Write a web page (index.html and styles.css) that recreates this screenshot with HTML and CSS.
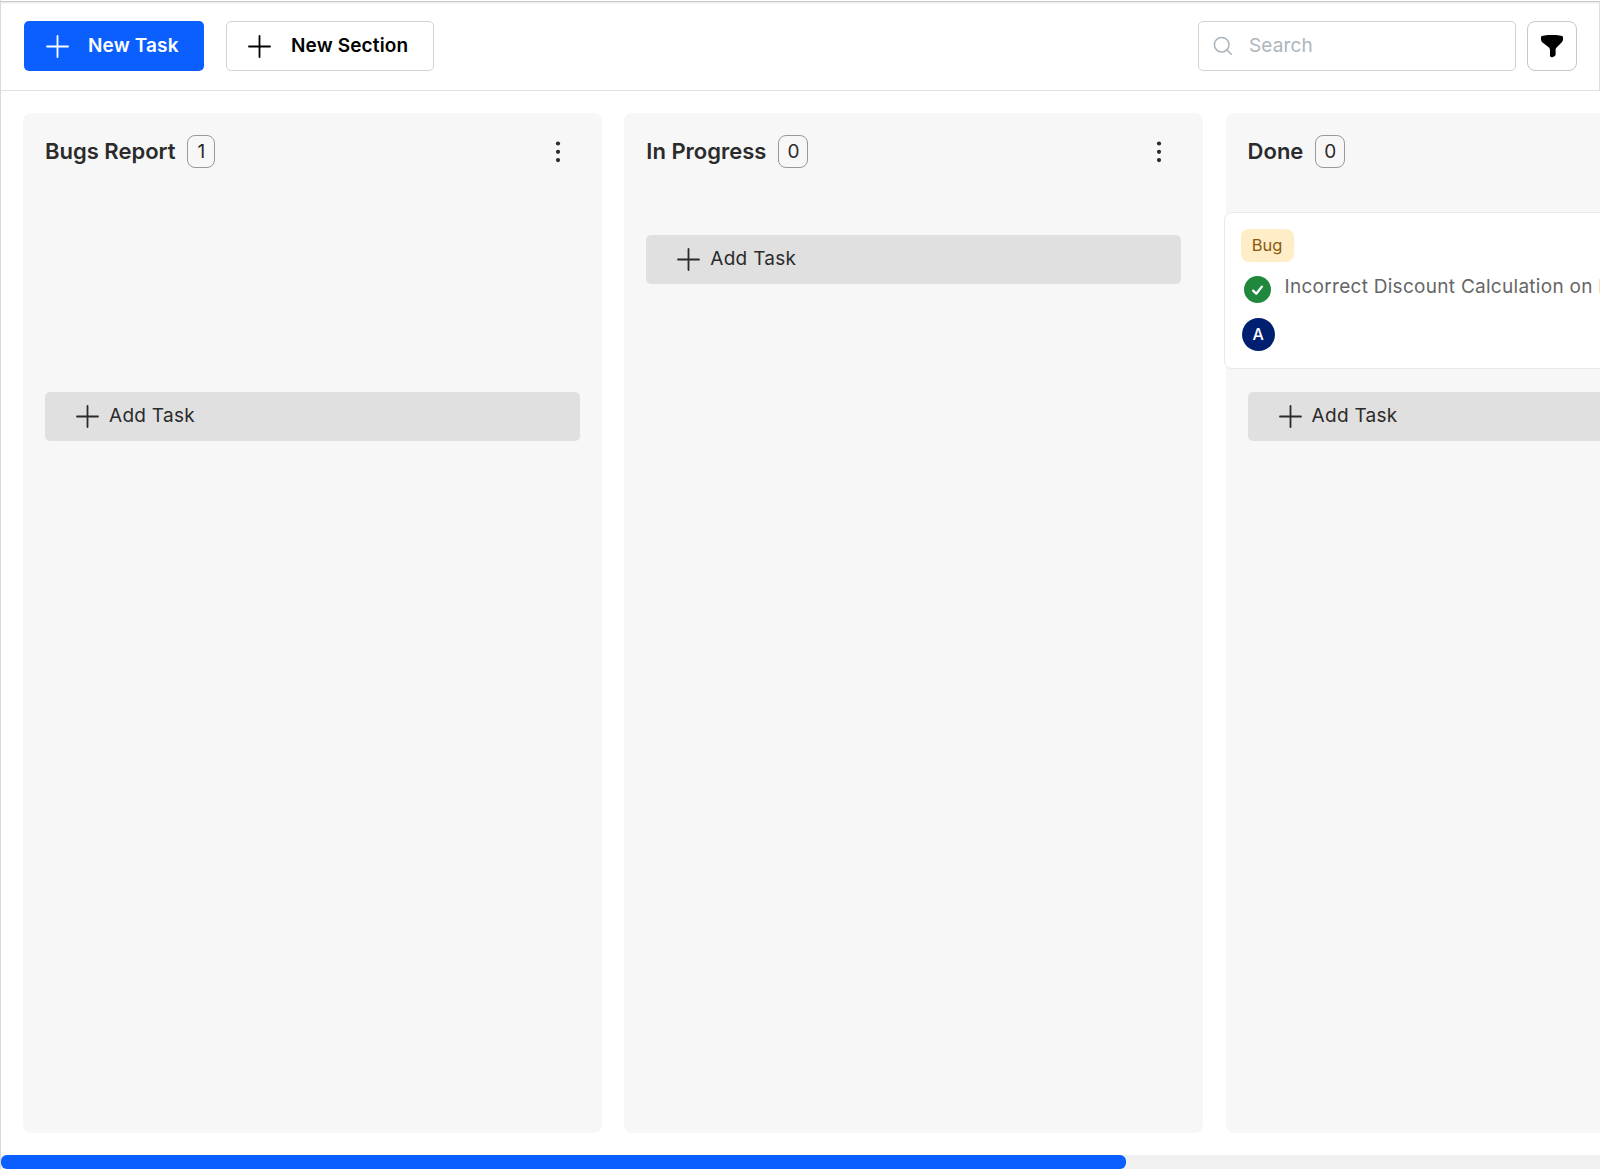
FILE: index.html
```html
<!DOCTYPE html>
<html lang="en">
<head>
  <meta charset="UTF-8">
  <title>Task Board</title>
  <link rel="stylesheet" href="styles.css">
</head>
<body>
  <svg class="sprite">
    <symbol id="plus" viewBox="0 0 23 23">
      <path d="M11.5 1v21M1 11.5h21" fill="none" stroke="currentColor" stroke-width="1.8" stroke-linecap="round"/>
    </symbol>
    <symbol id="dots" viewBox="0 0 6 24">
      <circle cx="3" cy="3.5" r="2.1"/>
      <circle cx="3" cy="11.8" r="2.1"/>
      <circle cx="3" cy="20.1" r="2.1"/>
    </symbol>
  </svg>

  <div class="app">
    <header class="toolbar">
      <button class="btn btn-primary"><svg class="plus"><use href="#plus"/></svg><span>New Task</span></button>
      <button class="btn btn-outline"><svg class="plus"><use href="#plus"/></svg><span>New Section</span></button>
      <label class="search">
        <svg class="search-icon" viewBox="0 0 20 20" fill="none" stroke="currentColor" stroke-width="1.5" stroke-linecap="round">
          <circle cx="8.7" cy="8.7" r="7.3"/>
          <path d="M14 14l4.3 4.3"/>
        </svg>
        <input type="text" placeholder="Search">
      </label>
      <button class="filter" aria-label="Filter">
        <svg viewBox="0 0 24 24">
          <path d="M1 3C1 .4 23 .4 23 3v2.3c0 1.2-.4 2-1.2 2.9l-5.2 5.2c-.7.7-1 1.300-1 2.200v4.700c0 1-.5 1.600-1.300 2l-1.200.7c-1.300.8-3.100.2-3.100-1.400V16c0-.9-.3-1.700-1-2.400L2.200 8.200C1.400 7.300 1 6.500 1 5.300z"/>
        </svg>
      </button>
    </header>

    <main class="board">
      <section class="column">
        <div class="column-head">
          <h2>Bugs Report</h2>
          <span class="count count-one">1</span>
          <svg class="dots"><use href="#dots"/></svg>
        </div>
        <div class="card-space"></div>
        <button class="add-task"><svg class="plus"><use href="#plus"/></svg><span>Add Task</span></button>
      </section>

      <section class="column">
        <div class="column-head">
          <h2>In Progress</h2>
          <span class="count">0</span>
          <svg class="dots"><use href="#dots"/></svg>
        </div>
        <button class="add-task"><svg class="plus"><use href="#plus"/></svg><span>Add Task</span></button>
      </section>

      <section class="column">
        <div class="column-head">
          <h2>Done</h2>
          <span class="count">0</span>
        </div>
        <article class="card">
          <span class="tag">Bug</span>
          <div class="card-title">
            <svg class="check" viewBox="0 0 27 27">
              <circle cx="13.5" cy="13.5" r="13.5" fill="#1f883d"/>
              <path d="M9.1 14.6l3.2 3.2 5.600-7.200" fill="none" stroke="#fff" stroke-width="2.300" stroke-linecap="round" stroke-linejoin="round"/>
            </svg>
            <span>Incorrect Discount Calculation on I</span>
          </div>
          <div class="avatar">A</div>
        </article>
        <button class="add-task"><svg class="plus"><use href="#plus"/></svg><span>Add Task</span></button>
      </section>
    </main>

    <div class="scrollbar"><div class="thumb"></div></div>
  </div>
</body>
</html>
```

FILE: styles.css
```css
* {
  box-sizing: border-box;
}
body {
  margin: 0;
  font-family: Inter, sans-serif;
  color: #2b2b2b;
  background: #fff;
  overflow: hidden;
}
button {
  font-family: inherit;
  padding: 0;
  border: none;
}
.sprite {
  display: none;
}
.app {
  width: 1600px;
  height: 1169px;
  padding-top: 1px;
  display: flex;
  flex-direction: column;
  border-left: 1px solid #d9d9d9;
  overflow: hidden;
}
.toolbar {
  height: 90px;
  flex: none;
  display: flex;
  align-items: flex-start;
  padding: 19px 22px 0 23px;
  border-top: 1px solid #c9cbcb;
  border-right: 1px solid #dedede;
  border-bottom: 1px solid #dfe1e1;
  box-shadow: inset 0 2px 2px -1px #e4e4e4;
}
.plus {
  width: 23px;
  height: 23px;
  flex: none;
}
.btn {
  height: 50px;
  display: flex;
  align-items: center;
  border-radius: 5px;
  font-size: 19px;
  font-weight: 600;
  letter-spacing: 0.15px;
}
.btn span,
.add-task span {
  padding-bottom: 2px;
}
.btn-primary {
  width: 180px;
  padding-left: 22px;
  gap: 19px;
  color: #fff;
  background: #0b5fff;
}
.btn-outline {
  width: 208px;
  margin-left: 22px;
  padding-left: 21px;
  gap: 20px;
  color: #000;
  background: #fff;
  border: 1px solid #ced4da;
}
.search {
  width: 318px;
  height: 50px;
  margin-left: auto;
  display: flex;
  align-items: center;
  padding-left: 14px;
  gap: 16px;
  border: 1px solid #ced4da;
  border-radius: 5px;
  color: #aab4bd;
}
.search-icon {
  width: 20px;
  height: 20px;
  flex: none;
}
.search input {
  width: 240px;
  padding: 0 0 1px;
  border: none;
  outline: none;
  font-family: inherit;
  font-size: 19px;
  letter-spacing: 0.15px;
}
.search input::placeholder {
  color: #adb5bd;
}
.filter {
  width: 50px;
  height: 50px;
  margin-left: 11px;
  display: flex;
  align-items: center;
  justify-content: center;
  border: 1px solid #c8c8c8;
  border-radius: 8px;
  background: #fff;
}
.filter svg {
  width: 24px;
  height: 24px;
}
.board {
  height: 1020px;
  margin-top: 22px;
  padding-left: 22px;
  flex: none;
  display: flex;
  gap: 22.3px;
}
.column {
  width: 579px;
  flex: none;
  padding: 22px;
  border-radius: 8px;
  background: #f7f7f7;
}
.column-head {
  height: 33px;
  display: flex;
  align-items: center;
}
.column-head h2 {
  margin: 0;
  padding-bottom: 1px;
  font-size: 22px;
  font-weight: 600;
  letter-spacing: 0;
}
.count {
  height: 33px;
  margin-left: 12px;
  padding: 0 8px;
  line-height: 31px;
  font-size: 19px;
  border: 1px solid #999;
  border-radius: 8px;
}
.count-one {
  padding: 0 9px;
}
.dots {
  width: 6px;
  height: 24px;
  margin-left: auto;
  margin-right: 19px;
  fill: #2b2b2b;
}
.card-space {
  height: 157px;
  margin-top: 44px;
  margin-bottom: -44px;
}
.add-task {
  width: 535px;
  height: 49px;
  margin-top: 67px;
  padding-left: 31px;
  display: flex;
  align-items: center;
  gap: 10px;
  border-radius: 5px;
  font-size: 19px;
  letter-spacing: 0.28px;
  color: #2b2b2b;
  background: #e0e0e0;
}
/* the card hangs over the left edge of its column */
.card {
  width: 535px;
  height: 157px;
  margin: 44px 0 -44px -24px;
  padding: 16px;
  border: 1px solid #e9e9e9;
  border-radius: 8px;
  background: #fff;
}
.tag {
  display: block;
  width: 53px;
  height: 33px;
  line-height: 33px;
  text-align: center;
  font-size: 16.5px;
  border-radius: 8px;
  color: #8a5a0b;
  background: #ffedc8;
}
.card-title {
  height: 27px;
  margin: 14px 0 0 3px;
  display: flex;
  gap: 14px;
  font-size: 19px;
  line-height: 22px;
  letter-spacing: 0.28px;
  color: #666;
  white-space: nowrap;
}
.check {
  width: 27px;
  height: 27px;
  flex: none;
}
.avatar {
  width: 33px;
  height: 33px;
  margin: 15px 0 0 1px;
  line-height: 32px;
  text-align: center;
  font-size: 16px;
  font-weight: 500;
  border-radius: 50%;
  color: #fff;
  background: #001f70;
}
.scrollbar {
  height: 14px;
  margin-top: 22px;
  flex: none;
  background: #f0f0f0;
}
.thumb {
  width: 1125px;
  height: 14px;
  border-radius: 6px;
  background: #0b5fff;
}
```
